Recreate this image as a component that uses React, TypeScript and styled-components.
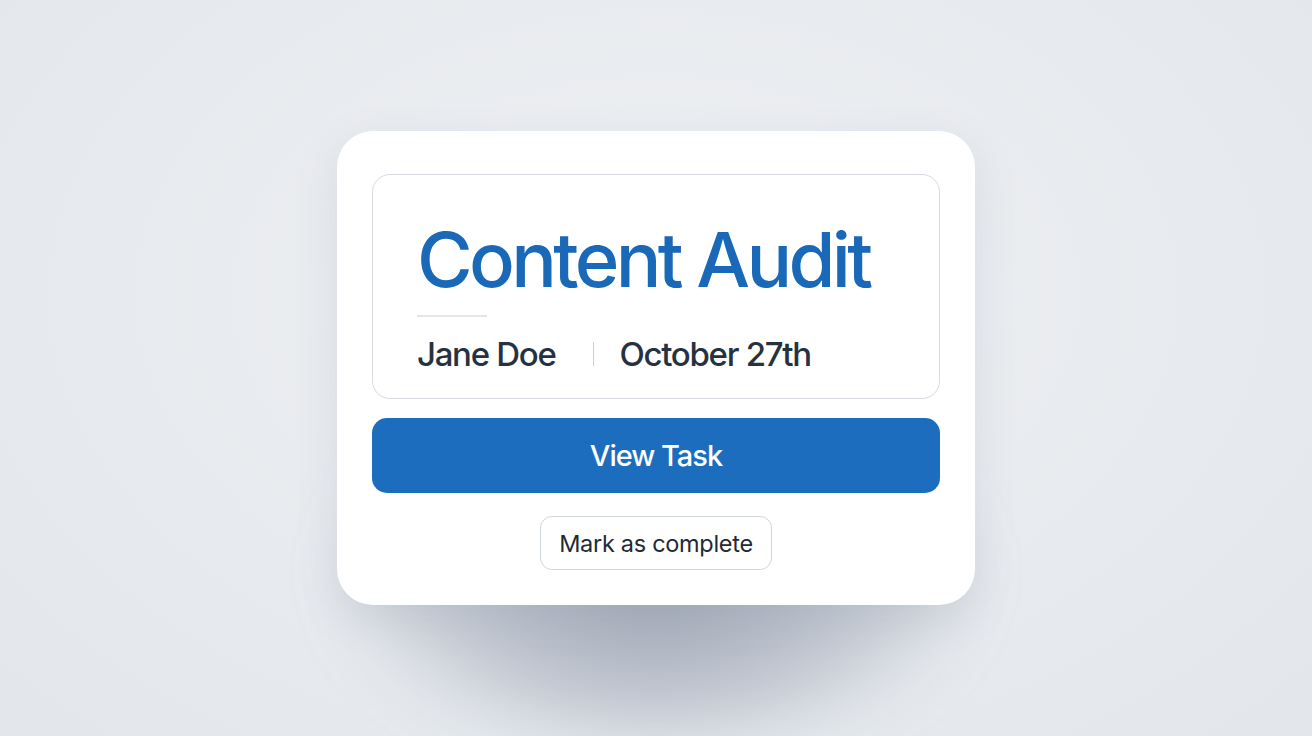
import React from 'react';
import styled, { createGlobalStyle } from 'styled-components';

const GlobalStyle = createGlobalStyle`
  html, body {
    margin: 0;
    padding: 0;
    height: 100%;
    overflow: hidden;
  }
  body {
    font-family: Inter, "Noto Sans", "Liberation Sans", sans-serif;
    background: radial-gradient(ellipse at 50% 40%, #eef0f3 0%, #e7eaee 60%, #e3e7eb 100%);
  }
  #root {
    height: 100%;
  }
`

const Page = styled.div`
  height: 100%;
  display: flex;
  align-items: center;
  justify-content: center;
`

const Card = styled.div`
  position: relative;
  width: 638px;
  box-sizing: border-box;
  padding: 43px 35px 35px;
  background: #fff;
  border-radius: 36px;
  display: flex;
  flex-direction: column;
  align-items: stretch;
  box-shadow: 0 14px 40px rgba(120, 130, 150, 0.16);

  &::after {
    content: '';
    position: absolute;
    left: 2%;
    right: 2%;
    top: 58%;
    bottom: -128px;
    border-radius: 50%;
    background: radial-gradient(ellipse at 50% 55%, rgba(135, 143, 160, 0.75) 0%, rgba(145, 155, 172, 0.5) 40%, rgba(160, 170, 185, 0) 80%);
    filter: blur(32px);
    z-index: -1;
  }
`

const InfoBox = styled.div`
  box-sizing: border-box;
  height: 225px;
  border: 1px solid #d6dbe1;
  border-radius: 18px;
  padding: 39px 44px 0;
  display: flex;
  flex-direction: column;
`

const Title = styled.h1`
  margin: 0;
  font-size: 76px;
  line-height: 90px;
  font-weight: 540;
  letter-spacing: -3.7px;
  white-space: nowrap;
  color: #1a68b8;
`

const Rule = styled.div`
  width: 70px;
  height: 2px;
  background: #e2e6ea;
  margin-top: 11px;
`

const Meta = styled.div`
  display: flex;
  align-items: center;
  margin-top: 17px;
  font-size: 33px;
  font-weight: 500;
  letter-spacing: -1.3px;
  white-space: nowrap;
  color: #26323f;
`

const MetaSep = styled.span`
  width: 1px;
  height: 24px;
  background: #c8cfd7;
  margin: 0 26px 0 37px;
`

const PrimaryButton = styled.button`
  margin-top: 19px;
  height: 75px;
  border: none;
  border-radius: 15px;
  background: #1c6dbd;
  color: #fff;
  font-family: inherit;
  font-size: 29px;
  font-weight: 500;
  letter-spacing: -1px;
  cursor: pointer;
`

const SecondaryButton = styled.button`
  align-self: center;
  margin-top: 23px;
  height: 54px;
  width: 232px;
  border: 1px solid #cfd5dc;
  border-radius: 12px;
  background: #fff;
  color: #1f2a36;
  font-family: inherit;
  font-size: 23.5px;
  font-weight: 400;
  letter-spacing: -0.3px;
  cursor: pointer;
`

export default function App() {
  return (
    <>
      <GlobalStyle />
      <Page>
        <Card>
          <InfoBox>
            <Title>Content Audit</Title>
            <Rule />
            <Meta>
              <span>Jane Doe</span>
              <MetaSep />
              <span>October 27th</span>
            </Meta>
          </InfoBox>
          <PrimaryButton>View Task</PrimaryButton>
          <SecondaryButton>Mark as complete</SecondaryButton>
        </Card>
      </Page>
    </>
  );
}
